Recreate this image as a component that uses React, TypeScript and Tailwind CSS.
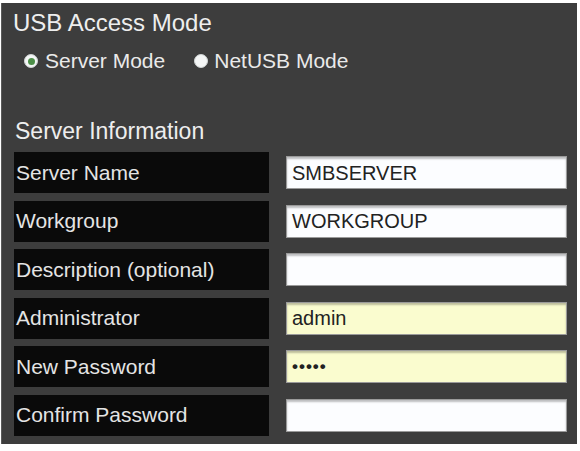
const ROWS = [
  { label: 'Server Name', value: 'SMBSERVER', type: 'text', yellow: false },
  { label: 'Workgroup', value: 'WORKGROUP', type: 'text', yellow: false },
  { label: 'Description (optional)', value: '', type: 'text', yellow: false },
  { label: 'Administrator', value: 'admin', type: 'text', yellow: true },
  { label: 'New Password', value: '•••••', type: 'password', yellow: true },
  { label: 'Confirm Password', value: '', type: 'text', yellow: false },
];

function Radio({ checked }: { checked: boolean }) {
  return (
    <span className="w-[14px] h-[14px] rounded-full bg-[#f4f6f6] border border-[#cfd4d4] flex items-center justify-center shrink-0">
      {checked && <span className="w-[7px] h-[7px] rounded-full bg-[#4c8f48]" />}
    </span>
  );
}

export default function App() {
  return (
    <div className="min-h-screen bg-white pt-[3px] pl-[1px]" style={{ fontFamily: '"Liberation Sans", Arial, sans-serif' }}>
      <div className="w-[576px] h-[441px] bg-[#3d3d3d] border-l border-[#5a5a5a] pt-[6px]">
        {/* USB mode */}
        <div className="pl-[11px] text-[24px] leading-[28px] text-[#eeeeee]">USB Access Mode</div>
        <div className="mt-[12px] h-[24px] flex items-center text-[21px] leading-[24px] text-[#eaeaea]">
          <div className="flex items-center pl-[22px]">
            <Radio checked />
            <span className="ml-[7px]">Server Mode</span>
          </div>
          <div className="flex items-center ml-[29px]">
            <Radio checked={false} />
            <span className="ml-[6px]">NetUSB Mode</span>
          </div>
        </div>

        {/* server info */}
        <div className="mt-[44px] pl-[13px] text-[23px] leading-[28px] text-[#eeeeee]">Server Information</div>
        <div className="mt-[7px] pl-[12px] flex flex-col gap-[7.5px]">
          {ROWS.map((r) => (
            <div key={r.label} className="flex items-center h-[41px]">
              <div className="w-[255px] h-full bg-[#0a0a0a] flex items-center pl-[2px] text-[21px] text-[#e4e4e4]">
                {r.label}
              </div>
              <div
                className={
                  'ml-[17px] w-[281px] h-[33px] border border-[#9a9a9a] shadow-[inset_0_2px_2px_rgba(0,0,0,0.25)] flex items-center pl-[5px] text-[#222222] ' +
                  (r.yellow ? 'bg-[#fafccf]' : 'bg-[#fcfdff]')
                }
              >
                {r.type === 'password' ? (
                  <span className="text-[17px] font-bold tracking-[1px]">{r.value}</span>
                ) : (
                  <span className="text-[20px]">{r.value}</span>
                )}
              </div>
            </div>
          ))}
        </div>
      </div>
    </div>
  );
}
